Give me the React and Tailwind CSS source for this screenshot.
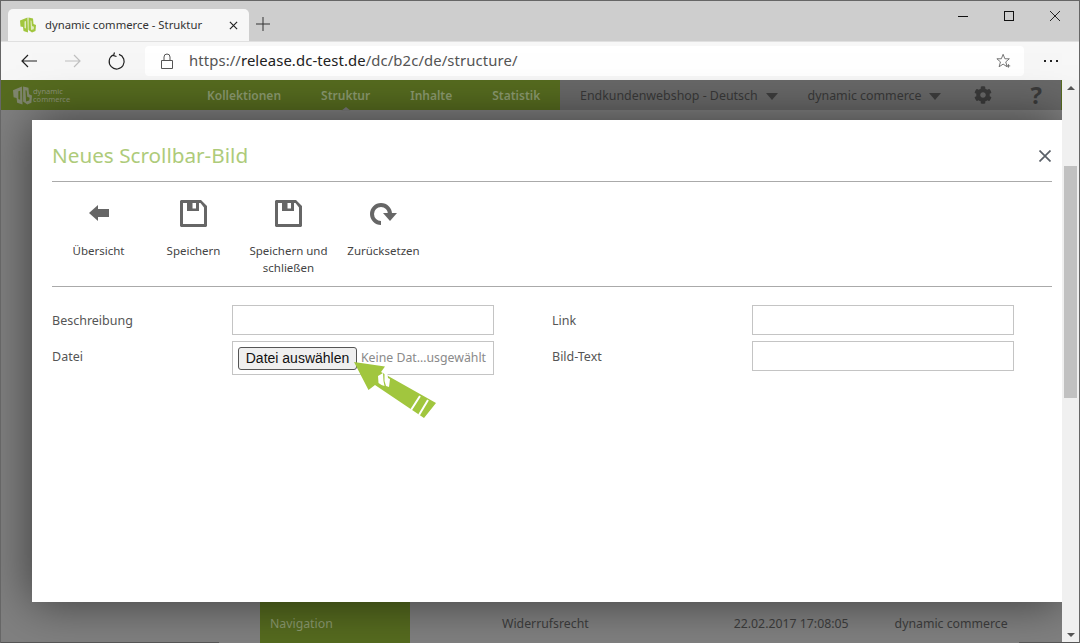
import React from "react";
import { FaCog } from "react-icons/fa";

const page = { fontFamily: '"Noto Sans", sans-serif' };

function Logo({ className, fill = "#a1c63e", cut = "#dfeabf" }) {
  return (
    <svg viewBox="0 0 16 16" className={className}>
      <path d="M0 3.500L7.500 .5 8 15.500 3.500 14 3 10 .5 9.500z" fill={fill} />
      <path d="M8.500 .5L13 1.500 13.500 7 16 8 15.500 14 12 15.500 8.500 13z" fill={fill} />
      <path d="M4.500 4.500L6 4V11.500L4.500 11zM10.500 3.500l1 .3L12 9l2 .8-.3 2.500-2.700.7z" fill={cut} />
    </svg>
  );
}

function Caret({ color = "#3d3d3d" }) {
  return <span className="block w-0 h-0 border-x-[6px] border-x-transparent border-t-[7px]" style={{ borderTopColor: color }} />;
}

function Save() {
  return (
    <svg viewBox="0 0 27 27" className="w-[27px] h-[27px]">
      <path fillRule="evenodd" fill="#666" d="M1 0h20l6 6v20l-1 1H1l-1-1V1zM3 3v21h21V7.500L20.500 3H19v8H7V3zM12.500 3v5.500H16V3z" />
    </svg>
  );
}

function Tool({ icon, label }) {
  return (
    <div className="flex flex-col items-center w-[95px] -translate-x-[1px]">
      <div className="h-[28px] flex items-center justify-center">{icon}</div>
      <div className="mt-[15px] text-[11.500px] leading-[17px] text-[#444] text-center">{label}</div>
    </div>
  );
}

function Field({ label, w, children }) {
  return (
    <div className="flex items-start">
      <div className={`${w} pt-[7px] text-[12.500px] leading-[18px] text-[#555]`}>{label}</div>
      {children}
    </div>
  );
}

const inputCls = "w-[262px] h-[30px] border border-[#c4c4c4] bg-white";

export default function App() {
  return (
    <div className="relative w-[1080px] h-[643px] overflow-hidden bg-[#808080] flex flex-col border-x border-t border-[#666]" style={page}>
      {/* Tab strip */}
      <div className="h-[40px] bg-[#cecece] flex items-end pl-[7px] shrink-0">
        <div className="w-[241px] h-[32px] bg-[#f7f7f7] rounded-t-[5px] flex items-center pl-[12px] pr-[11px]">
          <Logo className="w-[16px] h-[16px] shrink-0 -mt-[1px]" />
          <span className="ml-[9px] text-[11.300px] text-[#333] flex-1 whitespace-nowrap">dynamic commerce - Struktur</span>
          <svg viewBox="0 0 10 10" className="w-[9px] h-[9px]"><path d="M1 1l8 8M9 1l-8 8" stroke="#222" strokeWidth="1.300" /></svg>
        </div>
        <div className="h-[32px] flex items-center ml-[7px] pb-[2px]">
          <svg viewBox="0 0 14 14" className="w-[14px] h-[14px]"><path d="M7 0v14M0 7h14" stroke="#333" strokeWidth="1" /></svg>
        </div>
        <div className="ml-auto h-[40px] flex items-center self-start pb-[10px] pr-[1px]">
          <div className="w-[46px] flex justify-center"><span className="block w-[10px] h-[1px] bg-[#111]" /></div>
          <div className="w-[46px] flex justify-center"><span className="block w-[10px] h-[10px] border border-[#111]" /></div>
          <div className="w-[46px] flex justify-center">
            <svg viewBox="0 0 10 10" className="w-[10px] h-[10px]"><path d="M0 0l10 10M10 0L0 10" stroke="#111" strokeWidth="0.900" /></svg>
          </div>
        </div>
      </div>

      {/* Toolbar */}
      <div className="h-[39px] bg-[#f7f7f7] border-t border-[#e0e0e0] flex items-center pl-[20px] shrink-0">
        <svg viewBox="0 0 16 14" className="w-[16px] h-[14px]"><path d="M16 7H1M7 1L1 7l6 6" fill="none" stroke="#222" strokeWidth="1.200" /></svg>
        <svg viewBox="0 0 16 14" className="w-[16px] h-[14px] ml-[28px]"><path d="M0 7h15M9 1l6 6-6 6" fill="none" stroke="#c0c0c0" strokeWidth="1.200" /></svg>
        <svg viewBox="0 0 18 18" className="w-[18px] h-[18px] ml-[27px]"><path d="M11 2.400A7.500 7.500 0 1 1 5 3M6.500 .5L5.500 3.500l3 1" fill="none" stroke="#222" strokeWidth="1.200" /></svg>
        <div className="ml-[19px] w-[879px] h-[30px] bg-white rounded-[4px] flex items-center pl-[16px] pr-[12px]">
          <svg viewBox="0 0 12 16" className="w-[12px] h-[16px]"><path d="M.5 7.500h11v8H.5zM3 7.500V4a3 3 0 0 1 6 0v3.500" fill="none" stroke="#555" /></svg>
          <span className="ml-[16px] -mt-[2px] text-[14.850px] text-[#555] tracking-[0.1px] whitespace-nowrap">https://<span className="text-[#222]">release.dc-test.de</span>/dc/b2c/de/structure/</span>
          <svg viewBox="0 0 18 17" className="w-[16px] h-[16px] ml-auto"><path d="M8 1l2 5h5l-4 3.500 1.500 5.500L8 12l-4.500 3L5 9.500 1 6h5z" fill="none" stroke="#666" /><path d="M14 12v4M12 14h4" stroke="#666" /></svg>
        </div>
        <div className="ml-[20px] flex gap-[4px]">
          <span className="w-[2px] h-[2px] bg-[#222]" /><span className="w-[2px] h-[2px] bg-[#222]" /><span className="w-[2px] h-[2px] bg-[#222]" />
        </div>
      </div>

      {/* Page area */}
      <div className="relative flex-1 flex min-h-0">
        <div className="flex-1 flex flex-col min-w-0">
          <header className="h-[30px] flex shrink-0 border-r border-[#566b1f]">
            <div className="w-[559px] bg-[#566b1f] flex items-center relative">
              <div className="flex items-center ml-[12px] w-[194px]">
                <Logo className="w-[19px] h-[19px]" fill="#80876f" cut="#566b1f" />
                <div className="text-[7.500px] leading-[8.500px] text-[#8a9278] ml-[1px]">dynamic<br />commerce</div>
              </div>
              <nav className="flex gap-[40px] font-semibold text-[12px] text-[#8b9a6f] pt-[2px]">
                <span>Kollektionen</span>
                <span className="relative">Struktur<span className="absolute left-1/2 -translate-x-1/2 -bottom-[6px] w-0 h-0 border-x-[5px] border-x-transparent border-b-[4px] border-b-[#7b7b7b]" /></span>
                <span>Inhalte</span>
                <span>Statistik</span>
              </nav>
            </div>
            <div className="flex-1 bg-[#686868] flex items-center text-[12.400px] text-[#383838] pl-[20px] pt-[2px]">
              <span>Endkundenwebshop - Deutsch</span>
              <span className="ml-[8px]"><Caret /></span>
              <span className="ml-[30px]">dynamic commerce</span>
              <span className="ml-[8px]"><Caret /></span>
              <FaCog className="ml-[33px] w-[18px] h-[18px] text-[#3a3a3a] -mt-[2px]" />
              <span className="ml-[38px] text-[24px] leading-[24px] font-bold text-[#3a3a3a] -mt-[3px]">?</span>
            </div>
          </header>
          <div className="h-[492px] shrink-0" />
          <div className="flex-1 relative flex text-[12.300px] text-[#3d3d3d]">
            <div className="ml-[259px] w-[150px] bg-[#566b1f] pl-[10px] pt-[13px] text-[#8b9a6f]">Navigation</div>
            <div className="ml-[92px] pt-[13px]">Widerrufsrecht</div>
            <div className="ml-[145px] pt-[13px]">22.02.2017 17:08:05</div>
            <div className="ml-[46px] pt-[13px]">dynamic commerce</div>
          </div>
        </div>

        {/* Scrollbar */}
        <div className="w-[17px] bg-[#f0f0f0] flex flex-col items-center shrink-0 z-20">
          <span className="mt-[6px] w-0 h-0 border-x-[4px] border-x-transparent border-b-[4px] border-b-[#555]" />
          <div className="mt-[76px] w-[13px] h-[232px] bg-[#c1c1c1]" />
          <span className="mt-auto mb-[6px] w-0 h-0 border-x-[4px] border-x-transparent border-t-[4px] border-t-[#555]" />
        </div>

        {/* Modal */}
        <div className="absolute left-[31px] top-[40px] w-[1030px] h-[482px] bg-white shadow-[0_0_45px_rgba(0,0,0,0.55)] pl-[20px] pr-[10px] z-10">
          <div className="h-[62px] flex items-center justify-between border-b border-[#aaa] pt-[10px]">
            <h1 className="text-[20.700px] text-[#aecb7a] font-normal">Neues Scrollbar-Bild</h1>
            <svg viewBox="0 0 12 12" className="w-[12px] h-[12px] mr-[1px]"><path d="M.5 .5l11 11M11.500 .5l-11 11" stroke="#5a6068" strokeWidth="1.700" /></svg>
          </div>
          <div className="h-[105px] flex pt-[17px] border-b border-[#aaa]">
            <Tool label="Übersicht" icon={<svg viewBox="0 0 20 16" className="w-[20px] h-[16px]"><path d="M0 8l9-8v4h11v8H9v4z" fill="#666" /></svg>} />
            <Tool label="Speichern" icon={<Save />} />
            <Tool label={<>Speichern und<br />schließen</>} icon={<Save />} />
            <Tool label="Zurücksetzen" icon={<svg viewBox="0 0 30 26" className="w-[30px] h-[26px]"><path d="M12 23a9 9 0 1 1 9-9" fill="none" stroke="#666" strokeWidth="4" /><path d="M14 13h14l-7 8z" fill="#666" /></svg>} />
          </div>
          <div className="grid grid-cols-[500px_1fr] pt-[18px] gap-y-[6px]">
            <Field w="w-[180px]" label="Beschreibung"><div className={inputCls} /></Field>
            <Field w="w-[200px]" label="Link"><div className={inputCls} /></Field>
            <Field w="w-[180px]" label="Datei">
              <div className="w-[262px] h-[34px] border border-[#c4c4c4] flex items-center pl-[5px] overflow-hidden whitespace-nowrap">
                <span className="h-[23px] w-[119px] shrink-0 border border-[#555] rounded-[3px] bg-[#efefef] text-center text-[14px] leading-[20px] text-[#111]" style={{ fontFamily: '"Liberation Sans", sans-serif' }}>Datei auswählen</span>
                <span className="ml-[4px] text-[12.300px] text-[#8a8a8a]">Keine Dat…usgewählt</span>
              </div>
            </Field>
            <Field w="w-[200px]" label="Bild-Text"><div className={inputCls} /></Field>
          </div>
          {/* Callout arrow */}
          <svg viewBox="0 0 90 65" className="absolute left-[321px] top-[241px] w-[90px] h-[65px]">
            <path d="M1 1L32 5.500 28 11 83 42 71 57 22 24 15.500 29z" fill="#a1c63e" />
            <path d="M67 35L58 49M75 39L66 54" stroke="#fff" strokeWidth="2" />
            <path d="M25 15l5-3 .5 8 1 5-3-1-3-2zM31.500 12l3 1 .5 4 2 1-1 8-3-1-1.500-5z" fill="#fff" />
          </svg>
        </div>

        {/* Window edge below the page */}
        <div className="absolute left-0 bottom-0 w-[218px] h-[1px] bg-[#555] z-20" />
        <div className="absolute right-0 bottom-0 w-[60px] h-[1px] bg-[#555] z-20" />
      </div>
    </div>
  );
}
